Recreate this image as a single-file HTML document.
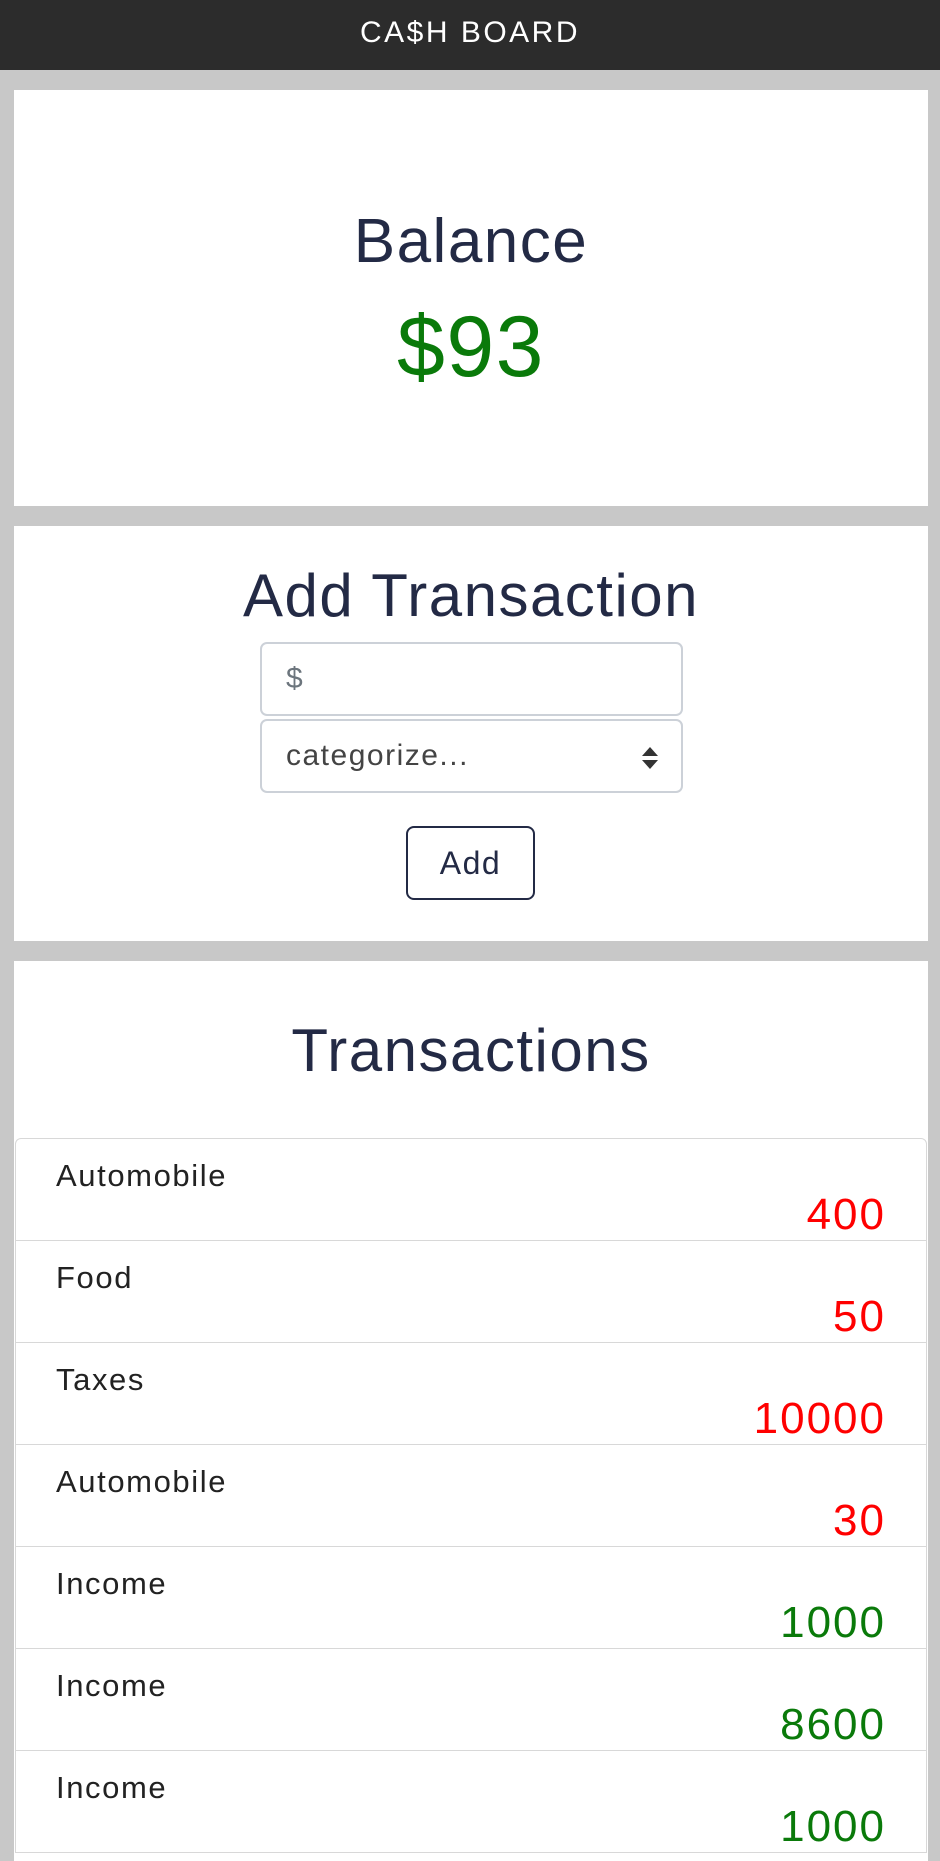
<!DOCTYPE html>
<html><head><style>
*{margin:0;padding:0;box-sizing:border-box}
body{width:940px;height:1832px;overflow:hidden;background:#c8c8c8;font-family:"Liberation Sans",sans-serif;position:relative}
.hdr{position:absolute;left:0;top:0;width:940px;height:70px;background:#2c2c2c;color:#fff;font-size:30px;text-align:center;line-height:66px;letter-spacing:2.5px}
.card{position:absolute;left:14px;width:914px;background:#fff}
.c{position:absolute;left:0;width:100%;text-align:center;color:#232a45;letter-spacing:1.5px}
.inp{position:absolute;left:260px;width:423px;height:74px;border:2px solid #ccd1d8;border-radius:7px;font-size:30px;color:#6c757d;padding-left:24px;line-height:70px;letter-spacing:1.5px}
.row{position:absolute;left:15px;width:912px;height:103px;border:1.5px solid #d8d8d8;background:#fff}
.lbl{position:absolute;left:40px;top:19px;font-size:31px;color:#222;letter-spacing:1.6px}
.amt{position:absolute;right:40px;top:51px;font-size:44px;letter-spacing:2px}
.r{color:#ff0000}.g{color:#0a7a0a}
</style></head><body>
<div class="hdr">CA$H BOARD</div>
<div class="card" style="top:90px;height:416px">
<div class="c" style="top:116px;font-size:62px">Balance</div>
<div class="c" style="top:208px;font-size:86px;color:#0a7a0a">$93</div>
</div>
<div class="card" style="top:526px;height:415px">
<div class="c" style="top:35px;font-size:60px">Add Transaction</div>
</div>
<div class="inp" style="top:642px">$</div>
<div class="inp" style="top:719px;color:#444">categorize...
<svg style="position:absolute;right:22px;top:26px" width="18" height="22" viewBox="0 0 18 22"><path d="M9 0L17 9H1Z M9 22L17 13H1Z" fill="#333"/></svg></div>
<div style="position:absolute;left:406px;top:826px;width:129px;height:74px;border:2px solid #232a45;border-radius:8px;text-align:center;line-height:70px;font-size:32px;color:#232a45;letter-spacing:1.5px">Add</div>
<div class="card" style="top:961px;height:900px">
<div class="c" style="top:55px;font-size:60px">Transactions</div>
</div>
<div class="row" style="top:1138px;border-radius:6px 6px 0 0"><div class="lbl">Automobile</div><div class="amt r">400</div></div>
<div class="row" style="top:1240px"><div class="lbl">Food</div><div class="amt r">50</div></div>
<div class="row" style="top:1342px"><div class="lbl">Taxes</div><div class="amt r">10000</div></div>
<div class="row" style="top:1444px"><div class="lbl">Automobile</div><div class="amt r">30</div></div>
<div class="row" style="top:1546px"><div class="lbl">Income</div><div class="amt g">1000</div></div>
<div class="row" style="top:1648px"><div class="lbl">Income</div><div class="amt g">8600</div></div>
<div class="row" style="top:1750px"><div class="lbl">Income</div><div class="amt g">1000</div></div>
</body></html>
